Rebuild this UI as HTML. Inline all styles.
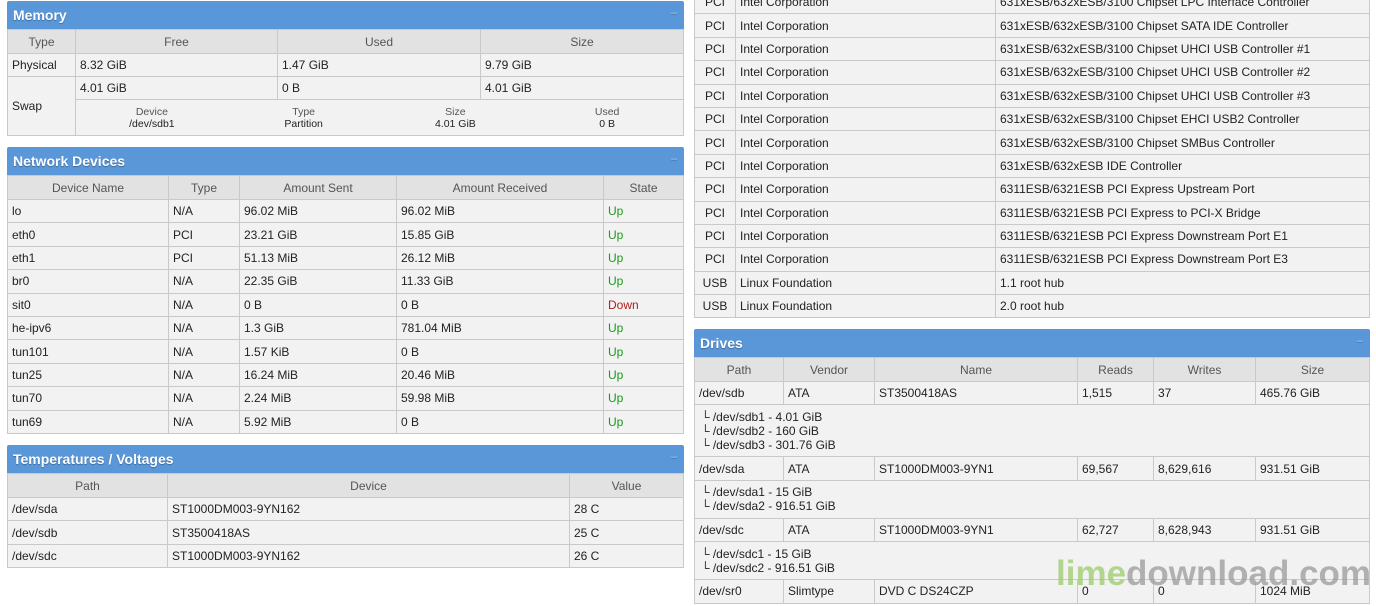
<!DOCTYPE html>
<html><head><meta charset="utf-8"><style>
*{box-sizing:border-box;margin:0;padding:0}
body{width:1376px;height:606px;overflow:hidden;background:#fff;font-family:"Liberation Sans",sans-serif;font-size:12px;color:#222;position:relative}
.p{position:absolute}
.h{height:28px;background:#5a97d8;color:#fff;font-weight:bold;font-size:14px;line-height:28px;padding-left:6px;text-shadow:0 1px 1px rgba(0,0,0,.3);position:relative;border-radius:2px 2px 0 0}
.h:after{content:"–";position:absolute;right:7px;top:-2px;font-weight:normal;font-size:11px;color:#a9c9ec}
table{border-collapse:collapse;width:100%;table-layout:fixed;background:#f2f2f2}
td,th{border:1px solid #c9c9c9;padding:0 4px;white-space:nowrap;overflow:hidden;text-align:left;font-weight:normal;vertical-align:middle}
th{background:#e2e2e2;color:#555;text-align:center}
.up{color:#1a9a1a}.dn{color:#b0201a}
.sub{font-size:10.5px;text-align:center;color:#555;line-height:12px}
.sub b{font-weight:normal;color:#222;display:block}
.wm{position:absolute;left:1056px;top:554px;font-size:35px;font-weight:bold;letter-spacing:0px;opacity:.75}
</style></head><body>

<div class="p" style="left:7px;top:1px;width:677px">
<div class="h">Memory</div>
<table>
<col style="width:68px"><col style="width:202px"><col style="width:203px"><col>
<tr style="height:24px"><th>Type</th><th>Free</th><th>Used</th><th>Size</th></tr>
<tr style="height:23px"><td>Physical</td><td>8.32 GiB</td><td>1.47 GiB</td><td>9.79 GiB</td></tr>
<tr style="height:23px"><td rowspan="2">Swap</td><td>4.01 GiB</td><td>0 B</td><td>4.01 GiB</td></tr>
<tr style="height:36px"><td colspan="3" style="padding:0">
<div style="display:flex"><div class="sub" style="flex:1">Device<b>/dev/sdb1</b></div><div class="sub" style="flex:1">Type<b>Partition</b></div><div class="sub" style="flex:1">Size<b>4.01 GiB</b></div><div class="sub" style="flex:1">Used<b>0 B</b></div></div></td></tr>
</table></div>

<div class="p" style="left:7px;top:147px;width:677px">
<div class="h">Network Devices</div>
<table>
<col style="width:161px"><col style="width:71px"><col style="width:157px"><col style="width:207px"><col>
<tr style="height:24px"><th>Device Name</th><th>Type</th><th>Amount Sent</th><th>Amount Received</th><th>State</th></tr>
<tr style="height:23.4px"><td>lo</td><td>N/A</td><td>96.02 MiB</td><td>96.02 MiB</td><td class="up">Up</td></tr>
<tr style="height:23.4px"><td>eth0</td><td>PCI</td><td>23.21 GiB</td><td>15.85 GiB</td><td class="up">Up</td></tr>
<tr style="height:23.4px"><td>eth1</td><td>PCI</td><td>51.13 MiB</td><td>26.12 MiB</td><td class="up">Up</td></tr>
<tr style="height:23.4px"><td>br0</td><td>N/A</td><td>22.35 GiB</td><td>11.33 GiB</td><td class="up">Up</td></tr>
<tr style="height:23.4px"><td>sit0</td><td>N/A</td><td>0 B</td><td>0 B</td><td class="dn">Down</td></tr>
<tr style="height:23.4px"><td>he-ipv6</td><td>N/A</td><td>1.3 GiB</td><td>781.04 MiB</td><td class="up">Up</td></tr>
<tr style="height:23.4px"><td>tun101</td><td>N/A</td><td>1.57 KiB</td><td>0 B</td><td class="up">Up</td></tr>
<tr style="height:23.4px"><td>tun25</td><td>N/A</td><td>16.24 MiB</td><td>20.46 MiB</td><td class="up">Up</td></tr>
<tr style="height:23.4px"><td>tun70</td><td>N/A</td><td>2.24 MiB</td><td>59.98 MiB</td><td class="up">Up</td></tr>
<tr style="height:23.4px"><td>tun69</td><td>N/A</td><td>5.92 MiB</td><td>0 B</td><td class="up">Up</td></tr>
</table></div>

<div class="p" style="left:7px;top:445px;width:677px">
<div class="h">Temperatures / Voltages</div>
<table>
<col style="width:160px"><col style="width:402px"><col>
<tr style="height:24px"><th>Path</th><th>Device</th><th>Value</th></tr>
<tr style="height:23.4px"><td>/dev/sda</td><td>ST1000DM003-9YN162</td><td>28 C</td></tr>
<tr style="height:23.4px"><td>/dev/sdb</td><td>ST3500418AS</td><td>25 C</td></tr>
<tr style="height:23.4px"><td>/dev/sdc</td><td>ST1000DM003-9YN162</td><td>26 C</td></tr>
</table></div>

<div class="p" style="left:694px;top:-10px;width:676px">
<table>
<col style="width:41px"><col style="width:260px"><col>
<tr style="height:23.4px"><td style="text-align:center">PCI</td><td>Intel Corporation</td><td>631xESB/632xESB/3100 Chipset LPC Interface Controller</td></tr>
<tr style="height:23.4px"><td style="text-align:center">PCI</td><td>Intel Corporation</td><td>631xESB/632xESB/3100 Chipset SATA IDE Controller</td></tr>
<tr style="height:23.4px"><td style="text-align:center">PCI</td><td>Intel Corporation</td><td>631xESB/632xESB/3100 Chipset UHCI USB Controller #1</td></tr>
<tr style="height:23.4px"><td style="text-align:center">PCI</td><td>Intel Corporation</td><td>631xESB/632xESB/3100 Chipset UHCI USB Controller #2</td></tr>
<tr style="height:23.4px"><td style="text-align:center">PCI</td><td>Intel Corporation</td><td>631xESB/632xESB/3100 Chipset UHCI USB Controller #3</td></tr>
<tr style="height:23.4px"><td style="text-align:center">PCI</td><td>Intel Corporation</td><td>631xESB/632xESB/3100 Chipset EHCI USB2 Controller</td></tr>
<tr style="height:23.4px"><td style="text-align:center">PCI</td><td>Intel Corporation</td><td>631xESB/632xESB/3100 Chipset SMBus Controller</td></tr>
<tr style="height:23.4px"><td style="text-align:center">PCI</td><td>Intel Corporation</td><td>631xESB/632xESB IDE Controller</td></tr>
<tr style="height:23.4px"><td style="text-align:center">PCI</td><td>Intel Corporation</td><td>6311ESB/6321ESB PCI Express Upstream Port</td></tr>
<tr style="height:23.4px"><td style="text-align:center">PCI</td><td>Intel Corporation</td><td>6311ESB/6321ESB PCI Express to PCI-X Bridge</td></tr>
<tr style="height:23.4px"><td style="text-align:center">PCI</td><td>Intel Corporation</td><td>6311ESB/6321ESB PCI Express Downstream Port E1</td></tr>
<tr style="height:23.4px"><td style="text-align:center">PCI</td><td>Intel Corporation</td><td>6311ESB/6321ESB PCI Express Downstream Port E3</td></tr>
<tr style="height:23.4px"><td style="text-align:center">USB</td><td>Linux Foundation</td><td>1.1 root hub</td></tr>
<tr style="height:23.4px"><td style="text-align:center">USB</td><td>Linux Foundation</td><td>2.0 root hub</td></tr>
</table></div>

<div class="p" style="left:694px;top:329px;width:676px">
<div class="h">Drives</div>
<table>
<col style="width:89px"><col style="width:91px"><col style="width:203px"><col style="width:76px"><col style="width:102px"><col>
<tr style="height:24px"><th>Path</th><th>Vendor</th><th>Name</th><th>Reads</th><th>Writes</th><th>Size</th></tr>
<tr style="height:23.4px"><td>/dev/sdb</td><td>ATA</td><td>ST3500418AS</td><td>1,515</td><td>37</td><td>465.76 GiB</td></tr>
<tr style="height:52px"><td colspan="6" style="line-height:14px;padding-left:6px">└ /dev/sdb1 - 4.01 GiB<br>└ /dev/sdb2 - 160 GiB<br>└ /dev/sdb3 - 301.76 GiB</td></tr>
<tr style="height:23.4px"><td>/dev/sda</td><td>ATA</td><td>ST1000DM003-9YN1</td><td>69,567</td><td>8,629,616</td><td>931.51 GiB</td></tr>
<tr style="height:38px"><td colspan="6" style="line-height:14px;padding-left:6px">└ /dev/sda1 - 15 GiB<br>└ /dev/sda2 - 916.51 GiB</td></tr>
<tr style="height:23.4px"><td>/dev/sdc</td><td>ATA</td><td>ST1000DM003-9YN1</td><td>62,727</td><td>8,628,943</td><td>931.51 GiB</td></tr>
<tr style="height:38px"><td colspan="6" style="line-height:14px;padding-left:6px">└ /dev/sdc1 - 15 GiB<br>└ /dev/sdc2 - 916.51 GiB</td></tr>
<tr style="height:23.4px"><td>/dev/sr0</td><td>Slimtype</td><td>DVD C DS24CZP</td><td>0</td><td>0</td><td>1024 MiB</td></tr>
</table></div>

<div class="wm"><span style="color:#9ccc6a">lime</span><span style="color:#9a9a9a">download.com</span></div>
</body></html>
